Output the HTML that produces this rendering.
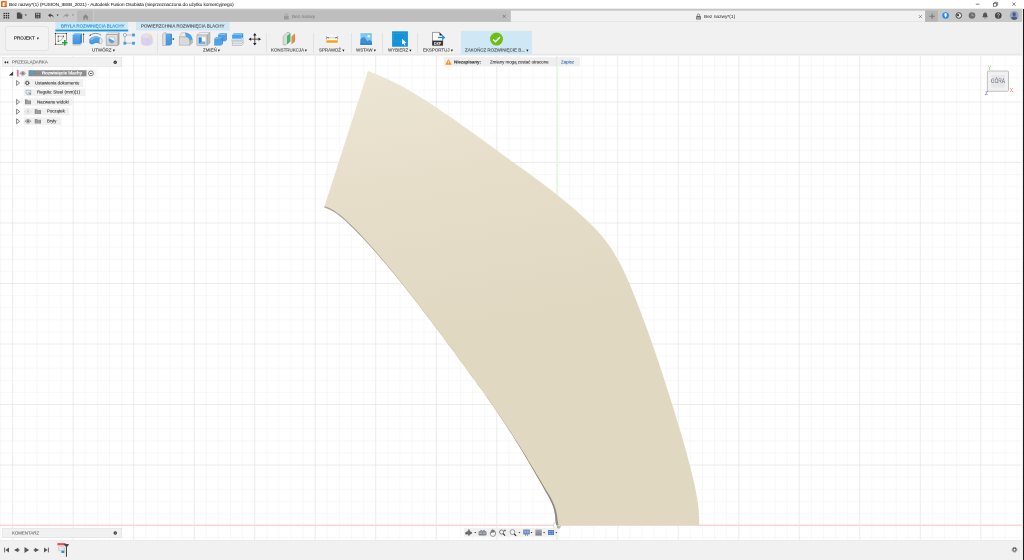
<!DOCTYPE html>
<html lang="pl">
<head>
<meta charset="utf-8">
<title>Bez nazwy*(1) - Autodesk Fusion</title>
<style>
*{box-sizing:border-box;margin:0;padding:0}
html,body{width:1024px;height:560px;overflow:hidden;background:#fff}
body{position:relative;-webkit-text-stroke:0.2px;font-family:"Liberation Sans",sans-serif;color:#3a3a3a;font-size:5.2px;line-height:1}
.abs{position:absolute}
.t,.lbl{will-change:transform}
.t{position:absolute;white-space:nowrap;line-height:1;transform:scale(0.5);transform-origin:0 0}
#titlebar{position:absolute;left:0;top:0;width:1024px;height:9px;background:#fff;border-bottom:1px solid #ececec}
#tabbar{position:absolute;left:0;top:9px;width:1024px;height:12.7px;background:#c8c8c8}
#ribbon{position:absolute;left:0;top:22px;width:1024px;height:34px;background:linear-gradient(#f1f1f1 0,#f1f1f1 31px,#eeeeee 31px,#eeeeee 32px,#e8e8e8 32px,#e8e8e8 33px,#f2f2f2 33px,#f2f2f2 34px)}
#canvas{position:absolute;left:0;top:56px;width:1024px;height:485px;background:#fff;overflow:hidden}
#timeline{position:absolute;left:0;top:540px;width:1024px;height:20px;background:#f1f1f1;border-top:1px solid #ebebeb}
.lbl{position:absolute;white-space:nowrap;font-size:8.9px;color:#585858;-webkit-text-stroke:0.34px;line-height:1;transform:scale(0.5);transform-origin:0 0}
.sep{position:absolute;top:33px;width:1px;height:20px;background:#e3e3e3}
.ar{font-size:7.4px;line-height:1;position:relative;top:-0.5px;margin-left:0.4px;color:#111;-webkit-text-stroke:0.4px}
</style>
</head>
<body>
<!-- TITLE BAR -->
<div id="titlebar">
  <svg class="abs" style="left:0.8px;top:0.8px" width="5.8" height="6.6" viewBox="0 0 14 16" preserveAspectRatio="none"><rect x="0" y="0" width="14" height="16" rx="1.5" fill="#ea6a1c"/><path d="M4 3.500h6.500v3H7v2h3v2.800H7v2.500H4z" fill="#fff"/><rect x="0" y="13.500" width="14" height="2.500" rx="1" fill="#b94c0e"/></svg>
  <div class="t" style="left:9.0px;top:1.90px;font-size:9.70px;color:#2a2a2a;letter-spacing:-0.24px;-webkit-text-stroke:0.1px">Bez nazwy*(1) (FUSION_IBSB_2021) - Autodesk Fusion Osobista (nieprzeznaczona do użytku komercyjnego)</div>
  <svg class="abs" style="left:970px;top:0" width="54" height="9" viewBox="0 0 54 9"><g stroke="#333" stroke-width="0.6" fill="none"><path d="M5.800 4.200h3.600"/><rect x="23.600" y="3.200" width="3" height="3"/><path d="M24.600 3.200v-0.900h3v3h-1"/><path d="M42.300 2.500l3.300 3.300M45.600 2.500l-3.300 3.300"/></g></svg>
</div>

<!-- TAB BAR -->
<div id="tabbar">
  <svg class="abs" style="left:0;top:0" width="1024" height="13" viewBox="0 9 1024 13">
    <defs><linearGradient id="tg" x1="0" y1="0" x2="0" y2="1"><stop offset="0" stop-color="#e2e2e2"/><stop offset="0.3" stop-color="#c5c5c5"/><stop offset="1" stop-color="#c5c5c5"/></linearGradient></defs>
    <rect x="0" y="8.400" width="1024" height="2.400" fill="url(#tg)"/>
    <rect x="77.100" y="10.400" width="15.700" height="11.300" fill="#b9b9b9"/>
    <rect x="94.200" y="10.500" width="415.600" height="11.200" fill="#bebebe"/>
    <rect x="511" y="10.700" width="414.100" height="11" fill="#f1f1f1"/>
    <rect x="925.100" y="10.500" width="12.700" height="11.100" fill="#b5b5b5"/>
  </svg>
  <div class="t" style="left:292.0px;top:5.00px;font-size:9.56px;color:#858585">Bez nazwy</div>
  <div class="t" style="left:704.0px;top:5.00px;font-size:9.70px;color:#505050">Bez nazwy*(1)</div>
  <svg class="abs" style="left:0;top:0" width="1024" height="13" viewBox="0 9 1024 13">
    <!-- app grid -->
    <g fill="#333"><rect x="3.5" y="12.8" width="1.400" height="1.400"/><rect x="5.7" y="12.8" width="1.400" height="1.400"/><rect x="7.8" y="12.8" width="1.400" height="1.400"/><rect x="3.5" y="15.0" width="1.400" height="1.400"/><rect x="5.7" y="15.0" width="1.400" height="1.400"/><rect x="7.8" y="15.0" width="1.400" height="1.400"/><rect x="3.5" y="17.1" width="1.400" height="1.400"/><rect x="5.7" y="17.1" width="1.400" height="1.400"/><rect x="7.8" y="17.1" width="1.400" height="1.400"/></g>
    <!-- file -->
    <path d="M16.9 12.4h3.4l2 2v4.4h-5.4z" fill="#4a4a4a"/><path d="M20.3 12.4v2h2z" fill="#8a8a8a"/>
    <path d="M24.6 14.6h2.4l-1.2 1.5z" fill="#444"/>
    <!-- save -->
    <path d="M35 12.8h5.5v5.5H35z" fill="#4a4a4a"/><rect x="36.2" y="13.4" width="3" height="1.7" fill="#c8c8c8"/><rect x="36.4" y="16.2" width="2.7" height="1.6" fill="#9a9a9a"/><rect x="37.4" y="12.8" width="0.7" height="5.5" fill="#4a4a4a"/>
    <!-- undo -->
    <path d="M48 15.2l2.6-2v1.3c2.2 0 3 1.4 3 3.6c-.5-1.4-1.3-2-3-2v1.3z" fill="#4a4a4a"/>
    <path d="M56.4 14.6h2.4l-1.2 1.5z" fill="#444"/>
    <!-- redo -->
    <path d="M69 15.2l-2.6-2v1.3c-2.2 0-3 1.4-3 3.6c.5-1.4 1.3-2 3-2v1.3z" fill="#999"/>
    <path d="M71.8 14.6h2.4l-1.2 1.5z" fill="#8c8c8c"/>
    <!-- home -->
    <path d="M82.6 17.2l3-2.9l3 2.9h-.8v2.5h-1.5v-1.7h-1.4v1.7h-1.5v-2.5z" fill="#888"/>
    <!-- lock inactive -->
    <g fill="none" stroke="#999" stroke-width="0.7"><path d="M285.1 16.2v-1a1.2 1.2 0 0 1 2.4 0v1"/></g><rect x="284" y="16.1" width="4.7" height="3.5" rx="0.4" fill="#9a9a9a"/>
    <!-- lock active -->
    <g fill="none" stroke="#666" stroke-width="0.7"><path d="M697.3 16.2v-1a1.2 1.2 0 0 1 2.4 0v1"/></g><rect x="696.2" y="16.1" width="4.7" height="3.5" rx="0.4" fill="#6a6a6a"/><rect x="697" y="17.2" width="3.1" height="0.5" fill="#ddd"/><rect x="697" y="18.3" width="3.1" height="0.5" fill="#ddd"/>
    <!-- tab closes -->
    <g stroke="#555" stroke-width="0.55"><path d="M502.7 14.8l3 3M505.7 14.8l-3 3"/><path d="M918.9 15.1l3 3M921.9 15.1l-3 3"/></g>
    <!-- plus -->
    <path d="M929.3 16.3h5.6M932.1 13.5v5.6" stroke="#777" stroke-width="1.1"/>
    <!-- job status -->
    <circle cx="945.6" cy="15.5" r="3.3" fill="#1e8df2"/><path d="M945.6 13.1c1 0 1.5 1 1.2 2l-.6 2.2h-1.2l-.6-2.2c-.3-1 .2-2 1.2-2z" fill="#fff"/>
    <circle cx="958.8" cy="15.5" r="2.8" fill="#e6e6e6" stroke="#444" stroke-width="1"/><path d="M956.7 14.2h2.3v2h-2.3z" fill="#444"/>
    <circle cx="972" cy="15.5" r="3.3" fill="#6e6e6e"/><path d="M972 13.6v2.1h1.7" stroke="#bbb" stroke-width="0.7" fill="none"/>
    <path d="M985.1 12.4c1.4 0 2 1.1 2 2.4c0 1.2.4 1.8 1 2.4h-6c.6-.6 1-1.200 1-2.400c0-1.300.6-2.400 2-2.400zM984.300 17.700h1.600a.800.800 0 0 1-1.600 0z" fill="#555"/>
    <circle cx="998.3" cy="15.500" r="3.300" fill="#454545"/><path d="M997.2 14.600a1.100 1.100 0 1 1 1.700.900c-.4.300-.6.500-.6 1" stroke="#eee" stroke-width="0.7" fill="none"/><circle cx="998.3" cy="17.600" r="0.400" fill="#eee"/>
    <circle cx="1014.2" cy="15.400" r="4.400" fill="#8fa5c4"/><path d="M1014.200 12.300a1.700 1.900 0 0 1 0 3.900a1.700 1.900 0 0 1 0-3.900zM1011 18.600c.3-1.500 1.600-2.200 3.200-2.200s2.900.7 3.200 2.200a4.400 4.400 0 0 1-6.400 0z" fill="#4d5f7c"/>
  </svg>
</div>

<!-- RIBBON -->
<div id="ribbon"></div>
<svg class="abs" style="left:0;top:22px" width="1024" height="33" viewBox="0 22 1024 33">
  <rect x="55.400" y="21.600" width="72.800" height="9.800" fill="#cfe8f6"/>
  <rect x="55.400" y="29.600" width="72.800" height="1.800" fill="#1a94dc"/>
  <rect x="136" y="21.600" width="93.600" height="8.900" fill="#cfe8f6"/>
  <rect x="460.900" y="30.900" width="71" height="23.300" fill="#cfe8f5"/>
</svg>
<!-- ribbon content (absolute in page coords) -->
<div class="abs" style="left:5px;top:26px;width:44px;height:24.5px;border:1px solid #e3e3e3;border-radius:3px;background:#f3f3f3"></div>
<div class="lbl" style="left:14.0px;top:36.10px;color:#222;font-size:9.00px">PROJEKT <span style="font-size:7.4px;position:relative;top:-0.5px;left:2.6px;color:#111;-webkit-text-stroke:0.4px">&#9662;</span></div>

<div class="lbl" style="left:60.5px;top:24.20px;color:#1b95dd;font-size:8.84px">BRYŁA ROZWINIĘCIA BLACHY</div>
<div class="lbl" style="left:141.0px;top:24.20px;color:#555;font-size:8.84px">POWIERZCHNIA ROZWINIĘCIA BLACHY</div>

<div class="sep" style="left:157px"></div>
<div class="sep" style="left:266px"></div>
<div class="sep" style="left:312.5px"></div>
<div class="sep" style="left:350.5px"></div>
<div class="sep" style="left:381.5px"></div>
<div class="sep" style="left:417px"></div>

<div class="lbl" style="left:92.0px;top:48.20px">UTWÓRZ <span class="ar">&#9662;</span></div>
<div class="lbl" style="left:203.0px;top:48.20px">ZMIEŃ <span class="ar">&#9662;</span></div>
<div class="lbl" style="left:271.0px;top:48.20px">KONSTRUKCJA <span class="ar">&#9662;</span></div>
<div class="lbl" style="left:319.0px;top:48.20px">SPRAWDŹ <span class="ar">&#9662;</span></div>
<div class="lbl" style="left:356.0px;top:48.20px">WSTAW <span class="ar">&#9662;</span></div>
<div class="lbl" style="left:388.0px;top:48.20px">WYBIERZ <span class="ar">&#9662;</span></div>
<div class="lbl" style="left:423.0px;top:48.20px">EKSPORTUJ <span class="ar">&#9662;</span></div>
<div class="lbl" style="left:465.0px;top:48.20px">ZAKOŃCZ ROZWINIĘCIE B... <span class="ar">&#9662;</span></div>

<!-- ICONS -->
<svg id="icons" class="abs" style="left:0;top:22px" width="1024" height="33" viewBox="0 22 1024 33">
  <defs>
    <linearGradient id="bl" x1="0" y1="0" x2="0" y2="1"><stop offset="0" stop-color="#5aa9ea"/><stop offset="1" stop-color="#3f93dc"/></linearGradient>
    <linearGradient id="gy" x1="0" y1="0" x2="0" y2="1"><stop offset="0" stop-color="#e4e4e4"/><stop offset="1" stop-color="#cfcfcf"/></linearGradient>
  </defs>
  <!-- 1 create sketch -->
  <rect x="55.4" y="33.4" width="11" height="10.8" fill="#f9f9f9" stroke="#3a3a3a" stroke-width="0.5"/>
  <g fill="#2b2b2b"><circle cx="55.4" cy="33.4" r="0.6"/><circle cx="66.4" cy="33.4" r="0.6"/><circle cx="55.4" cy="44.2" r="0.6"/></g>
  <path d="M58.2 41.3V36.2H63.4C63.2 38.6 61.4 40.8 58.2 41.3z" fill="none" stroke="#777" stroke-width="0.55"/>
  <g fill="#4a4a4a"><circle cx="58.2" cy="36.2" r="0.65"/><circle cx="63.4" cy="36.2" r="0.65"/><circle cx="58.2" cy="41.3" r="0.65"/></g>
  <path d="M64.8 39.9v5.8M61.900 42.800h5.800" stroke="#f1f1f1" stroke-width="2.600"/>
  <path d="M64.800 40.100v5.400M62.100 42.800h5.400" stroke="#17a43a" stroke-width="1.600"/>
  <!-- 2 extrude -->
  <path d="M72.600 44h7.400l2-1.500v1.500l-2 1.500h-7.400z" fill="#c9c6c2"/>
  <path d="M72.600 35l1.900-1.800h7.500l-2 1.800z" fill="#74b8f0"/>
  <path d="M80 35l2-1.800v9.300l-2 1.500z" fill="#3a8bd5"/>
  <rect x="72.600" y="35" width="7.400" height="9" fill="url(#bl)"/>
  <path d="M83.500 34v8.800" stroke="#333" stroke-width="0.500"/><path d="M83.500 33l.8 1.700h-1.600z" fill="#222"/>
  <!-- 3 revolve -->
  <path d="M89.700 35.600c3-2.800 8.500-2.900 11.500-.3" fill="none" stroke="#444" stroke-width="0.550"/><path d="M89.200 36.100l1.900-.9l-.8-1z" fill="#333"/>
  <path d="M89.300 39.200c3.300-3.600 8.200-3.900 11.200-1.100c1 1.200 1 4.600 0 5.900c-2.700-1.700-6-1.400-8.300.6c-1.200-.4-2.300-1-2.900-1.700z" fill="url(#bl)"/>
  <path d="M89.300 39.200c3.300-3.600 8.200-3.900 11.200-1.100c-3.300-1.300-6.300-.3-8.400 2.300z" fill="#79bcf2"/>
  <ellipse cx="100.700" cy="41" rx="1.500" ry="2.900" fill="#ececec" stroke="#9a9a9a" stroke-width="0.500"/>
  <!-- 4 hole -->
  <path d="M106.200 34.500l1.800-1.700h11.200l-1.400 1.700z" fill="#efefef" stroke="#8d8d8d" stroke-width="0.400"/>
  <path d="M117.800 34.500l1.400-1.700v11.200l-1.400 1.600z" fill="#b4b4b4" stroke="#8d8d8d" stroke-width="0.400"/>
  <rect x="106.200" y="34.500" width="11.600" height="11.100" rx="0.800" fill="url(#gy)" stroke="#858585" stroke-width="0.500"/>
  <circle cx="111.700" cy="40" r="3.300" fill="#f2f2f2" stroke="#a9a39c" stroke-width="0.500"/>
  <path d="M109.200 38.300a3 3 0 1 0 5.300 2.900z" fill="#4a9fe6"/>
  <!-- 5 pattern -->
  <path d="M126.600 35h5.400M124.900 36.800v4.800M126.400 43.200h5.600" stroke="#9a9a9a" stroke-width="0.600" fill="none"/>
  <circle cx="124.900" cy="35" r="1.600" fill="#f4f4f4" stroke="#7a7a7a" stroke-width="0.550"/>
  <rect x="132.100" y="33.600" width="2.800" height="2.800" fill="#3e9be3"/><rect x="123.500" y="41.800" width="2.800" height="2.800" fill="#3e9be3"/><rect x="132.100" y="41.800" width="2.800" height="2.800" fill="#3e9be3"/>
  <!-- 6 faded -->
  <path d="M141 38c0-2.600 2.300-4.400 5.300-4.400c3.600 0 6.500 2.200 6.500 5.600v2.700c0 2.500-2.500 3.800-6 3.800c-3.300 0-5.800-1.300-5.800-3.800z" fill="#dcd1eb"/>
  <path d="M141.600 37c.8-2.200 2.600-3.400 4.700-3.400c2.200 0 4.200.900 5.400 2.500c-1.600 1.400-3.400 2-5.400 2c-1.800 0-3.400-.4-4.700-1.100z" fill="#e6ddf1"/>
  <path d="M147.400 38.300v7.300" stroke="#d1c4e3" stroke-width="0.500"/>
  <path d="M150.200 33.100l.8 1.900l1.900.8l-1.900.8l-.8 1.900l-.8-1.900l-1.900-.8l1.900-.8z" fill="#f7dda0"/>
  <!-- 7 press pull -->
  <path d="M162.600 35c0-1.600 1.300-2.500 3.300-2.500v13h-3.300z" fill="#dedede" stroke="#9a9a9a" stroke-width="0.450"/>
  <path d="M165.900 33.500h4.300v12h-4.300z" fill="url(#bl)"/><path d="M170.200 33.500l1.700.6v10l-1.700 1.400z" fill="#2f86d3"/>
  <path d="M171.900 38.500h1.600v1.100h-1.600z" fill="#777"/><path d="M173.200 38l1.200 1.050l-1.200 1.050z" fill="#222"/>
  <!-- 8 fillet -->
  <path d="M179.400 36.900l2.300-4.300h4l3.900 4.300z" fill="#ebebeb" stroke="#9b9b9b" stroke-width="0.400"/>
  <path d="M189.600 40.500l2.900-1.500v4l-2.900 2.300z" fill="#b9b9b9" stroke="#9b9b9b" stroke-width="0.400"/>
  <path d="M179.400 36.900h6.500c2.200 0 3.700 1.600 3.700 3.800v4.600h-10.200z" fill="#d9d9d9" stroke="#9b9b9b" stroke-width="0.450"/>
  <path d="M185 32.700c4.200 0 7.400 2.700 7.500 6.500l-2.900 1.500c0-2.400-1.500-3.800-3.700-3.800z" fill="#4fa3e8"/>
  <!-- 9 shell -->
  <path d="M196.800 35l2.800-2.500h10.400l-3 2.500z" fill="#f0f0f0" stroke="#9a9a9a" stroke-width="0.400"/>
  <path d="M207 35l3-2.500v10.600l-3 2.500z" fill="#bcbcbc" stroke="#9a9a9a" stroke-width="0.400"/>
  <rect x="196.800" y="35" width="10.200" height="10.600" rx="0.700" fill="#d7d7d7" stroke="#909090" stroke-width="0.450"/>
  <rect x="198.800" y="37.300" width="6.600" height="6.600" fill="#fafafa"/>
  <path d="M198.800 37.500h2.700v4h3.900v2.400h-6.600z" fill="#6ab4f0"/><path d="M198.800 37.500h2.700v4.200l-2.700 1.800z" fill="#2b86d6"/>
  <!-- 10 combine -->
  <path d="M218.100 34.600l1.700-1.700h7l-1.600 1.700z" fill="#6fb6f0"/><path d="M225.200 34.600l1.600-1.700v7l-1.600 1.500z" fill="#3a8bd6"/><rect x="218.100" y="34.600" width="7.100" height="6.800" fill="#4fa1e6"/>
  <path d="M214.200 38.600l1.700-1.700h7l-1.600 1.700z" fill="#6fb6f0"/><path d="M221.300 38.600l1.600-1.700v7.200l-1.600 1.500z" fill="#3a8bd6"/><rect x="214.200" y="38.600" width="7.100" height="7" fill="#4fa1e6"/>
  <!-- 11 offset -->
  <path d="M232.400 41.200h9.300l1.500-1.200v3.900l-1.500 1.600h-9.300z" fill="#e6e6e6" stroke="#9c9c9c" stroke-width="0.450"/><path d="M232.400 43.300h9.300l1.500-1.400" fill="none" stroke="#aaa" stroke-width="0.400"/>
  <path d="M232.100 35l1.700-2.100h9.400l-1.500 2.100z" fill="#7abdf3"/><path d="M241.700 35l1.500-2.100v4.200l-1.500 1.600z" fill="#3a8bd6"/><rect x="232.100" y="35" width="9.600" height="3.700" fill="#4fa1e6"/>
  <path d="M231.100 39.400h10.800l2.200-2.200v1.500l-2.200 2.300h-10.800z" fill="#a5d3f6"/>
  <!-- 12 move -->
  <path d="M254.800 34.500v9.300M250.200 39.150h9.200" stroke="#222" stroke-width="0.750"/>
  <path d="M254.800 32.900l1.700 2.500h-3.400zM254.800 45.400l1.700-2.500h-3.400zM248.600 39.150l2.500-1.700v3.400zM261 39.150l-2.500-1.700v3.400z" fill="#222"/>
  <!-- KONSTRUKCJA -->
  <path d="M283.200 36.500l3.800-4h2.500v8.200l-3.700 4.100h-2.600z" fill="#dcdcdc" stroke="#8a8a8a" stroke-width="0.450"/>
  <path d="M287 36l3.500-3v8.500l-3.500 3z" fill="#3fba6b"/>
  <path d="M291.500 36.500l3.500-3.200v8.200l-3.500 3.100z" fill="#e8894a"/>
  <!-- SPRAWDZ -->
  <rect x="326" y="35.500" width="12.100" height="8" fill="#fbfbfd"/>
  <path d="M326.500 36.200v3.300M337.600 36.200v3.300" stroke="#555" stroke-width="0.500"/><path d="M327.500 37.800h9" stroke="#999" stroke-width="0.500"/>
  <path d="M326.800 37.800l1.700-.8v1.600zM337.300 37.800l-1.700-.8v1.600z" fill="#333"/>
  <rect x="326.300" y="40.300" width="11.500" height="2.400" rx="0.500" fill="#f5a30c"/>
  <!-- WSTAW -->
  <rect x="360" y="32.700" width="12.200" height="12.300" fill="#fdfaf6"/>
  <rect x="360.400" y="33.100" width="11.500" height="11.600" fill="#7cc6f8"/>
  <path d="M360.400 43v-3.500c1.200-1.500 2.300-2.200 3.200-2.200c1.600 0 2.300 2.200 3.600 3.700c.8.300 1.400-1 2.200-1c.8 0 1.600.8 2.500 1.600v3.100h-11.500z" fill="#3c8fd2"/>
  <rect x="360.400" y="43" width="11.500" height="1.700" fill="#2d85cc"/>
  <circle cx="368.700" cy="36.300" r="1.300" fill="#f6f4b4"/>
  <!-- WYBIERZ -->
  <rect x="392.100" y="31.300" width="15.800" height="15.400" fill="#1490dc"/>
  <rect x="393.600" y="33.300" width="11.400" height="8" fill="none" stroke="#3fd39a" stroke-width="0.600" stroke-dasharray="0.900 0.900"/>
  <path d="M402.100 38.800v6l1.400-1.200l1 2.100l1-.5l-1-2l1.800-.2z" fill="#fff"/>
  <!-- EKSPORTUJ -->
  <path d="M432.500 32.400h7l3.200 3.200v9.700h-10.200z" fill="#fbfbfb" stroke="#444" stroke-width="0.500"/>
  <path d="M439.500 32.400v3.200h3.200z" fill="#222"/>
  <rect x="432.300" y="40.600" width="10.600" height="4.900" fill="#333"/>
  <text x="437.600" y="44.500" font-family="Liberation Sans, sans-serif" font-size="3.600" font-weight="bold" fill="#fff" text-anchor="middle">DXF</text>
  <path d="M438 37.500h4.600" stroke="#1c8ce8" stroke-width="1.300"/><path d="M445.300 37.500l-3-2.400v4.800z" fill="#1c8ce8"/>
  <!-- ZAKONCZ -->
  <circle cx="496.500" cy="39.050" r="6.500" fill="#6cc014"/>
  <path d="M493.100 39.400l2.400 2.300l4.500-4.700" fill="none" stroke="#fff" stroke-width="1.500"/>
</svg>

<!-- CANVAS -->
<div id="canvas">
<svg class="abs" style="left:0;top:0" width="1024" height="485" viewBox="0 56 1024 485">
  <defs>
    <linearGradient id="eg" gradientUnits="userSpaceOnUse" x1="0" y1="207" x2="0" y2="525"><stop offset="0" stop-color="#a3a398"/><stop offset="0.12" stop-color="#aba696"/><stop offset="0.28" stop-color="#c6bb9f"/><stop offset="0.62" stop-color="#c4b89c"/><stop offset="0.78" stop-color="#857f72"/><stop offset="1" stop-color="#8f8f86"/></linearGradient>
    <linearGradient id="sg" gradientUnits="userSpaceOnUse" x1="340" y1="70" x2="385" y2="345"><stop offset="0" stop-color="#ede6d5"/><stop offset="0.45" stop-color="#e6dec9"/><stop offset="1" stop-color="#e1d8c2"/></linearGradient>
  </defs>
  <rect x="0" y="55" width="1024" height="486" fill="#fff"/>
  <path d="M0.56 55V541M24.76 55V541M36.86 55V541M48.97 55V541M61.07 55V541M85.27 55V541M97.37 55V541M109.48 55V541M121.58 55V541M145.78 55V541M157.88 55V541M169.99 55V541M182.09 55V541M206.29 55V541M218.39 55V541M230.50 55V541M242.60 55V541M266.80 55V541M278.90 55V541M291.01 55V541M303.11 55V541M327.31 55V541M339.41 55V541M351.52 55V541M363.62 55V541M387.82 55V541M399.92 55V541M412.03 55V541M424.13 55V541M448.33 55V541M460.43 55V541M472.54 55V541M484.64 55V541M508.84 55V541M520.94 55V541M533.05 55V541M545.15 55V541M569.35 55V541M581.45 55V541M593.56 55V541M605.66 55V541M629.86 55V541M641.96 55V541M654.07 55V541M666.17 55V541M690.37 55V541M702.47 55V541M714.58 55V541M726.68 55V541M750.88 55V541M762.98 55V541M775.09 55V541M787.19 55V541M811.39 55V541M823.49 55V541M835.60 55V541M847.70 55V541M871.90 55V541M884.00 55V541M896.11 55V541M908.21 55V541M932.41 55V541M944.51 55V541M956.62 55V541M968.72 55V541M992.92 55V541M1005.02 55V541M1017.13 55V541M0 65.67H1022M0 77.78H1022M0 89.88H1022M0 114.08H1022M0 126.18H1022M0 138.29H1022M0 150.39H1022M0 174.59H1022M0 186.69H1022M0 198.80H1022M0 210.90H1022M0 235.10H1022M0 247.20H1022M0 259.31H1022M0 271.41H1022M0 295.61H1022M0 307.71H1022M0 319.82H1022M0 331.92H1022M0 356.12H1022M0 368.22H1022M0 380.33H1022M0 392.43H1022M0 416.63H1022M0 428.73H1022M0 440.84H1022M0 452.94H1022M0 477.14H1022M0 489.24H1022M0 501.35H1022M0 513.45H1022M0 537.65H1022" stroke="#f3f3f3" stroke-width="0.550" fill="none"/>
  <path d="M12.66 55V541M73.17 55V541M133.68 55V541M194.19 55V541M254.70 55V541M315.21 55V541M375.72 55V541M436.23 55V541M496.74 55V541M617.76 55V541M678.27 55V541M738.78 55V541M799.29 55V541M859.80 55V541M920.31 55V541M980.82 55V541M0 101.98H1022M0 162.49H1022M0 223.00H1022M0 283.51H1022M0 344.02H1022M0 404.53H1022M0 465.04H1022" stroke="#dcdcdc" stroke-width="0.550" fill="none"/>
  <path d="M0 525.200H1022" stroke="#fcd5d5" stroke-width="1.400"/>
  <path d="M557.100 55V541" stroke="#e0fbe0" stroke-width="2"/>
  <circle cx="557" cy="525.600" r="3.600" fill="#fdfdfd" stroke="#b0b0b0" stroke-width="0.500"/><path d="M557 525.600h3.600a3.600 3.600 0 0 1-3.600 3.600z" fill="#b9b9b9"/><path d="M557.300 525.500v2.400" stroke="#5fd35f" stroke-width="0.700"/>
  
  <polygon id="shape" fill="url(#sg)" points="368.0,71.0 374.3,73.4 380.4,76.0 386.6,78.7 392.6,81.6 398.5,84.6 404.4,87.8 410.2,91.1 416.0,94.5 421.7,98.1 427.3,101.6 432.9,105.3 438.5,109.0 444.0,112.7 449.6,116.5 455.1,120.3 460.5,124.2 466.0,128.0 471.4,131.9 476.8,135.8 482.3,139.7 487.7,143.7 493.1,147.6 498.5,151.5 503.9,155.5 509.3,159.4 514.7,163.3 520.2,167.2 525.6,171.1 531.0,175.1 536.4,179.0 541.8,183.0 547.1,187.1 552.4,191.1 557.7,195.3 562.9,199.4 568.1,203.7 573.2,208.0 578.3,212.4 583.2,216.9 588.1,221.5 592.9,226.2 597.5,231.0 601.9,236.1 606.0,241.3 609.9,246.6 613.6,252.2 617.0,257.9 620.2,263.7 623.2,269.7 626.0,275.8 628.7,281.9 631.3,288.1 633.8,294.4 636.2,300.6 638.7,306.9 641.1,313.1 643.4,319.4 645.8,325.6 648.1,331.9 650.3,338.2 652.5,344.5 654.7,350.8 656.9,357.2 659.0,363.5 661.1,369.8 663.2,376.2 665.2,382.6 667.3,388.9 669.3,395.3 671.3,401.7 673.3,408.1 675.3,414.5 677.2,420.9 679.2,427.3 681.1,433.7 683.0,440.1 684.8,446.6 686.6,453.0 688.3,459.5 690.0,465.9 691.6,472.4 693.2,478.9 694.6,485.5 696.0,492.0 697.2,498.6 698.1,505.2 698.8,511.8 699.2,518.5 699.2,525.2 556.1,525.2 555.4,520.3 555.0,515.1 554.1,510.1 552.6,505.3 550.6,500.7 548.3,496.3 545.8,491.9 543.3,487.5 540.8,483.1 538.3,478.7 535.8,474.4 533.3,470.0 530.7,465.6 528.2,461.3 525.6,456.9 523.0,452.6 520.4,448.3 517.8,444.0 515.1,439.7 512.5,435.4 509.7,431.2 507.0,426.9 504.2,422.7 501.4,418.5 498.6,414.4 495.8,410.2 492.9,406.0 490.0,401.9 487.1,397.8 484.2,393.6 481.3,389.5 478.3,385.4 475.4,381.3 472.4,377.3 469.4,373.2 466.4,369.1 463.5,365.0 460.5,361.0 457.5,356.9 454.5,352.8 451.5,348.8 448.5,344.7 445.5,340.7 442.5,336.6 439.4,332.6 436.4,328.5 433.4,324.5 430.4,320.4 427.3,316.4 424.3,312.4 421.2,308.4 418.1,304.4 415.0,300.4 411.9,296.4 408.8,292.5 405.7,288.5 402.5,284.6 399.4,280.6 396.2,276.7 393.0,272.8 389.8,268.9 386.5,265.1 383.3,261.2 380.0,257.4 376.7,253.6 373.3,249.8 370.0,246.1 366.6,242.3 363.1,238.6 359.7,235.0 356.1,231.3 352.6,227.7 349.0,224.2 345.3,220.7 341.5,217.4 337.5,214.3 333.4,211.5 328.9,209.2 324.2,207.3"/>
  <polygon id="edge" fill="url(#eg)" points="556.1,525.2 555.4,520.3 555.0,515.1 554.1,510.1 552.6,505.3 550.6,500.7 548.3,496.3 545.8,491.9 543.3,487.5 540.8,483.1 538.3,478.7 535.8,474.4 533.3,470.0 530.7,465.6 528.2,461.3 525.6,456.9 523.0,452.6 520.4,448.3 517.8,444.0 515.1,439.7 512.5,435.4 509.7,431.2 507.0,426.9 504.2,422.7 501.4,418.5 498.6,414.4 495.8,410.2 492.9,406.0 490.0,401.9 487.1,397.8 484.2,393.6 481.3,389.5 478.3,385.4 475.4,381.3 472.4,377.3 469.4,373.2 466.4,369.1 463.5,365.0 460.5,361.0 457.5,356.9 454.5,352.8 451.5,348.8 448.5,344.7 445.5,340.7 442.5,336.6 439.4,332.6 436.4,328.5 433.4,324.5 430.4,320.4 427.3,316.4 424.3,312.4 421.2,308.4 418.1,304.4 415.0,300.4 411.9,296.4 408.8,292.5 405.7,288.5 402.5,284.6 399.4,280.6 396.2,276.7 393.0,272.8 389.8,268.9 386.5,265.1 383.3,261.2 380.0,257.4 376.7,253.6 373.3,249.8 370.0,246.1 366.6,242.3 363.1,238.6 359.7,235.0 356.1,231.3 352.6,227.7 349.0,224.2 345.3,220.7 341.5,217.4 337.5,214.3 333.4,211.5 328.9,209.2 324.2,207.3 324.6,206.2 329.4,208.1 334.0,210.5 338.2,213.4 342.2,216.5 346.0,219.9 349.7,223.4 353.3,227.0 356.8,230.6 360.3,234.3 363.8,238.0 367.2,241.7 370.6,245.5 373.9,249.3 377.2,253.1 380.5,256.9 383.8,260.8 387.0,264.7 390.2,268.6 393.4,272.5 396.6,276.4 399.8,280.3 402.9,284.3 406.0,288.2 409.2,292.2 412.3,296.2 415.3,300.2 418.4,304.2 421.5,308.2 424.5,312.2 427.6,316.2 430.6,320.2 433.6,324.3 436.7,328.3 439.7,332.4 442.7,336.5 445.7,340.5 448.7,344.6 451.7,348.6 454.7,352.7 457.7,356.8 460.7,360.8 463.7,364.9 466.7,368.9 469.6,373.0 472.6,377.1 475.6,381.2 478.6,385.3 481.5,389.4 484.4,393.5 487.4,397.6 490.3,401.7 493.2,405.9 496.0,410.0 498.9,414.2 501.7,418.3 504.5,422.5 507.3,426.7 510.1,431.0 512.8,435.2 515.5,439.5 518.2,443.7 520.8,448.0 523.5,452.3 526.1,456.6 528.7,461.0 531.3,465.3 533.9,469.6 536.5,474.0 539.1,478.3 541.6,482.6 544.2,487.0 546.8,491.3 549.5,495.6 552.0,500.1 554.1,504.7 555.9,509.7 557.0,514.9 557.6,520.0 558.4,525.2"/>
  
</svg>
</div>

<!-- TIMELINE -->
<div id="timeline"></div>
<!-- CANVAS UI OVERLAYS -->
<svg class="abs" style="left:0;top:55px" width="1024" height="505" viewBox="0 55 1024 505">
  <defs><linearGradient id="vs" x1="0" y1="0" x2="0" y2="1"><stop offset="0" stop-color="#a6aaaf"/><stop offset="1" stop-color="#7b8087"/></linearGradient></defs>
  <!-- notification -->
  <rect x="443.800" y="57.200" width="136" height="9.300" fill="#efefef"/>
  <path d="M556.300 57.200v9.300" stroke="#e2e2e2" stroke-width="0.800"/>
  <path d="M448.500 58.900l3.200 5.900h-6.400z" fill="#f7931e"/><path d="M448.500 60.700v2.200" stroke="#fff" stroke-width="0.600"/><circle cx="448.500" cy="63.800" r="0.350" fill="#fff"/>
  <!-- browser header -->
  <rect x="2.500" y="57.700" width="119.300" height="8.800" fill="#f1f1f1" stroke="#dcdcdc" stroke-width="0.500"/>
  <path d="M6 60.900v2.800l-1.900-1.400zM8.200 60.900v2.800l-1.900-1.400z" fill="#333"/>
  <circle cx="115.250" cy="62.300" r="1.700" fill="#2e2e2e"/><path d="M114.300 62.300h1.900" stroke="#eee" stroke-width="0.500"/>
  <!-- row backgrounds -->
  <rect x="16.250" y="69.700" width="80" height="7.400" fill="#f3f3f3"/>
  <rect x="28.500" y="70.250" width="58" height="6" fill="#8e8e8e"/>
  <rect x="23.750" y="79" width="59.400" height="8" fill="#f0f0f0"/>
  <rect x="23.750" y="88.750" width="61.800" height="7.200" fill="#f0f0f0"/>
  <rect x="23.750" y="98.200" width="48.750" height="7.400" fill="#f0f0f0"/>
  <rect x="23.750" y="107.900" width="45.650" height="7.400" fill="#f0f0f0"/>
  <rect x="23.750" y="117.500" width="37.500" height="7.400" fill="#f0f0f0"/>
  <!-- row1 icons -->
  <path d="M13.100 71.500v4h-4.300z" fill="#3e3e3e"/>
  <rect x="17.250" y="70" width="1.250" height="6.500" fill="#ef4f6c"/>
  <path d="M20 73.400c1.600-2.400 4-2.400 5.600 0c-1.600 2.400-4 2.400-5.600 0z" fill="#c4c4c4" stroke="#808080" stroke-width="0.550"/><circle cx="22.800" cy="73.400" r="1.100" fill="#757575"/>
  <path d="M29.800 75.500v-4.300c1.400-.6 2.300.5 4.600 0l.6 2c-1.400.4-2.300-.4-4.100.2" fill="#52a7ee" stroke="#2c7fcb" stroke-width="0.350"/>
  <circle cx="90.900" cy="73.400" r="2.400" fill="#fbfbfb" stroke="#333" stroke-width="0.600"/><path d="M89.700 72.900h2.400l-1.200 1.400z" fill="#222"/>
  <!-- expanders -->
  <g fill="#fafafa" stroke="#3d3d3d" stroke-width="0.600" stroke-linejoin="round">
    <path d="M16.600 80.500l3 2.500l-3 2.500z"/><path d="M16.600 99.400l3 2.500l-3 2.500z"/><path d="M16.600 109.100l3 2.500l-3 2.500z"/><path d="M16.600 118.750l3 2.500l-3 2.500z"/>
  </g>
  <!-- gear -->
  <circle cx="27.250" cy="83" r="1.500" fill="none" stroke="#505050" stroke-width="0.950"/><circle cx="27.250" cy="83" r="2.200" fill="none" stroke="#505050" stroke-width="0.700" stroke-dasharray="0.860 0.868"/>
  <!-- rule icon -->
  <path d="M26 90.300h4.700v4.400h-2.200a2.300 2.300 0 0 1-2.500-2.200z" fill="#f7f7f7" stroke="#8a8a8a" stroke-width="0.550"/><path d="M27.600 92.200h2.400M27.600 93.300h2.400" stroke="#777" stroke-width="0.450"/><rect x="29.200" y="93" width="1.500" height="1.500" fill="#4ea3e6"/>
  <!-- folders -->
  <g fill="#8e8e8e">
    <path d="M25 99.600h2.300l.6.800h3.100v3.800h-6z"/><path d="M34.750 109.300h2.300l.6.800h3.350v3.800h-6.250z"/><path d="M34.750 118.950h2.300l.6.800h3.350v3.800h-6.250z"/>
  </g>
  <g stroke="#f0f0f0" stroke-width="0.350"><path d="M27.100 100.600v3.600M29.100 100.600v3.600M36.900 110.300v3.600M38.900 110.300v3.600M36.900 119.900v3.600M38.900 119.900v3.600"/></g>
  <!-- eyes -->
  <path d="M25 111.600c1.700-2.300 4.300-2.300 6 0c-1.700 2.300-4.300 2.300-6 0z" fill="#f6f6f6" stroke="#c6c6c6" stroke-width="0.550"/><circle cx="28" cy="111.600" r="1.050" fill="#c9c9c9"/>
  <path d="M25 121.250c1.700-2.400 4.300-2.400 6 0c-1.700 2.400-4.300 2.400-6 0z" fill="#c4c4c4" stroke="#808080" stroke-width="0.550"/><circle cx="28" cy="121.250" r="1.100" fill="#757575"/>
  <!-- comments bar -->
  <rect x="2.500" y="528.600" width="119.300" height="8.800" fill="#f1f1f1" stroke="#d9d9d9" stroke-width="0.500"/>
  <circle cx="115.250" cy="533" r="1.700" fill="#2e2e2e"/><path d="M115.250 532.100v1.900" stroke="#eee" stroke-width="0.500"/>
  <!-- nav bar -->
  <rect x="464.100" y="528.100" width="94.400" height="8.600" fill="#f0f0f0"/>
  <g fill="#3a3a3a">
    <path d="M474.300 532h2l-1 1.200zM518.400 532h2l-1 1.200zM530.600 532h2l-1 1.200zM543.100 532h2l-1 1.200zM555.300 532h2l-1 1.200z"/>
  </g>
  <!-- orbit -->
  <ellipse cx="468.700" cy="532.900" rx="3.200" ry="1.150" fill="#8a8a8a" stroke="#4c4c4c" stroke-width="0.700"/>
  <ellipse cx="468.900" cy="532.500" rx="0.750" ry="3" fill="#8a8a8a" stroke="#4c4c4c" stroke-width="0.600"/>
  <path d="M465.300 534.400l1.800-.3l-1.100-1.200z" fill="#333"/>
  <!-- look at -->
  <path d="M478.500 532.400c0-1 .8-1.500 1.600-1.500l.5-1h1.300l.4.800h.600l.4-.8h1.300l.5 1c.800 0 1.500.5 1.500 1.500v2.100c0 .8-.6 1.100-1.300 1.100h-5.500c-.7 0-1.300-.3-1.300-1.100z" fill="#8b919d"/>
  <path d="M479.500 533.200h2.300M483.200 533.200h2.300" stroke="#c9ccd3" stroke-width="0.700"/><path d="M479.200 534.700h6.400" stroke="#70757f" stroke-width="0.500"/>
  <!-- pan -->
  <path d="M490.400 532.600c0-.9.900-.9 1 0v-1.700c0-.8 1-.8 1 0v-.6c0-.8 1-.8 1 0v.6c0-.7 1-.7 1 0v1c0-.6 1-.6 1 .1v2c0 1.500-.9 2.300-2.600 2.300c-1.400 0-2.100-.9-2.400-1.900z" fill="#fafafa" stroke="#5a5a5a" stroke-width="0.650"/>
  <path d="M491.400 532.600v-1.700c0-.8 1-.8 1 0v-.6c0-.8 1-.8 1 0v.6c0-.7 1-.7 1 0v1.700z" fill="#777"/>
  <!-- zoom + -->
  <circle cx="501.600" cy="532" r="2.100" fill="#e9f3fb" stroke="#5a5a5a" stroke-width="0.700"/><path d="M503.100 533.600l2 2" stroke="#333" stroke-width="1.100"/><path d="M504.900 529.500v2M503.900 530.500h2" stroke="#444" stroke-width="0.600"/>
  <!-- zoom window -->
  <circle cx="512.500" cy="532.100" r="2.400" fill="#eef6fb" stroke="#7d7d7d" stroke-width="0.750"/><path d="M514.200 533.900l1.900 1.900" stroke="#2e2e2e" stroke-width="1.200"/>
  <!-- display -->
  <rect x="523.200" y="529.600" width="6.600" height="4.800" rx="0.400" fill="#6a84ae"/><rect x="524.300" y="530.500" width="1.900" height="2.700" fill="#86b0ea"/><rect x="526.800" y="530.500" width="1.900" height="2.700" fill="#86b0ea"/><path d="M525.300 534.400h.8v1.400h-.8zM527 534.400h.8v1.400h-.8z" fill="#6d6d6d"/>
  <!-- visual style -->
  <rect x="535.400" y="529.500" width="6.400" height="6.100" fill="url(#vs)"/>
  <!-- grid -->
  <rect x="548.100" y="530" width="5.900" height="5" fill="#4a78bd"/><path d="M548.900 530.800h1.900v1.400h-1.900zM551.400 530.800h1.900v1.400h-1.900zM548.900 532.900h1.900v1.400h-1.900zM551.400 532.900h1.900v1.400h-1.900z" fill="#83a9df"/>
  <!-- viewcube -->
  <rect x="987.400" y="71" width="21.100" height="20.300" rx="1" fill="#f1f1f3" stroke="#b3b3b3" stroke-width="0.800"/>
  <rect x="991.400" y="75.100" width="13.500" height="12.500" fill="#e5e7eb"/>
  <!-- timeline controls -->
  <g fill="#555">
    <rect x="4.200" y="547.600" width="0.900" height="4.800"/><path d="M9 547.600v4.800l-3.600-2.400z"/>
    <path d="M18.300 547.700v4.600l-4.300-2.300z"/><rect x="17.400" y="549.300" width="2" height="1.400"/>
    <path d="M24.500 547.100l4.600 2.900l-4.600 2.900z"/>
    <path d="M34.800 547.700v4.600l4.300-2.300z"/><rect x="33.700" y="549.300" width="2" height="1.400"/>
    <rect x="47.900" y="547.600" width="0.900" height="4.800"/><path d="M44 547.600v4.800l3.600-2.400z"/>
  </g>
  <rect x="57.400" y="543.100" width="8.300" height="2.200" fill="#f2485a"/>
  <path d="M58.400 547.300c1.600-.9 3.400-.9 5.700-.3l.4 3.300c-1.800-.5-3.800-.3-5.400.6z" fill="#f9f9f9" stroke="#9e9e9e" stroke-width="0.500"/>
  <path d="M59.300 548.700c1.500-.6 3-.6 4.500-.2" fill="none" stroke="#b5b5b5" stroke-width="0.450"/>
  <path d="M60.600 553.200h3.300v3.300h-3.300z" fill="#f6f6f6" stroke="#dcdcdc" stroke-width="0.400"/>
  <rect x="61.400" y="550.600" width="3" height="2.400" fill="#2b8eea"/>
  <path d="M64.200 544.100h4.600c0 1.300-1 2.200-1.800 2.700h-1c-.9-.5-1.800-1.400-1.800-2.700z" fill="#484848"/><rect x="65.900" y="546" width="1.100" height="10.800" fill="#484848"/>
  <!-- settings gear -->
  <circle cx="1014.500" cy="549.700" r="1.600" fill="none" stroke="#5c5c5c" stroke-width="1.050"/><circle cx="1014.500" cy="549.700" r="2.450" fill="none" stroke="#5c5c5c" stroke-width="0.800" stroke-dasharray="0.960 0.964"/>
</svg>
<div class="t" style="left:454.0px;top:60.10px;font-size:8.84px;font-weight:bold;color:#333">Niezapisany:</div>
<div class="t" style="left:490.0px;top:60.10px;font-size:8.76px;color:#333">Zmiany mogą zostać utracone</div>
<div class="t" style="left:561.0px;top:60.10px;font-size:8.90px;color:#1a6db5">Zapisz</div>
<div class="t" style="left:12.0px;top:60.10px;font-size:8.84px;color:#666">PRZEGLĄDARKA</div>
<div class="t" style="left:42.0px;top:71.10px;font-size:8.74px;font-weight:bold;color:#fff">Rozwinięcie blachy</div>
<div class="t" style="left:35.0px;top:80.80px;font-size:8.78px;color:#333">Ustawienia dokumentu</div>
<div class="t" style="left:37.0px;top:90.10px;font-size:8.76px;color:#333">Reguła: Steel (mm)(1)</div>
<div class="t" style="left:37.0px;top:99.60px;font-size:8.80px;color:#333">Nazwane widoki</div>
<div class="t" style="left:47.0px;top:109.20px;font-size:8.64px;color:#333">Początek</div>
<div class="t" style="left:47.0px;top:119.10px;font-size:8.40px;color:#333">Bryły</div>
<div class="t" style="left:12.0px;top:531.00px;font-size:8.72px;color:#666">KOMENTARZ</div>
<div class="t" style="left:991.0px;top:78.20px;font-size:12.60px;color:#8b8e94;-webkit-text-stroke:0.55px;transform-origin:0 0;transform:scale(0.3750,0.5)">GÓRA</div>
<div class="t" style="left:987.5px;top:65.30px;font-size:12.40px;color:#7de27d;transform-origin:0 0;transform:scale(0.3750,0.5)">Y</div>
<div class="t" style="left:1010.0px;top:87.20px;font-size:11.60px;color:#fa7a7a;transform-origin:0 0;transform:scale(0.3900,0.5)">X</div>
<div class="t" style="left:985.0px;top:90.00px;font-size:11.60px;color:#6a6af8;transform-origin:0 0;transform:scale(0.4250,0.5)">Z</div>


<!-- right window edge -->
<div class="abs" style="left:1022px;top:9px;width:1px;height:551px;background:#ececec"></div>
<div class="abs" style="left:1023px;top:9px;width:1px;height:551px;background:#1c1c1c"></div>
</body>
</html>
